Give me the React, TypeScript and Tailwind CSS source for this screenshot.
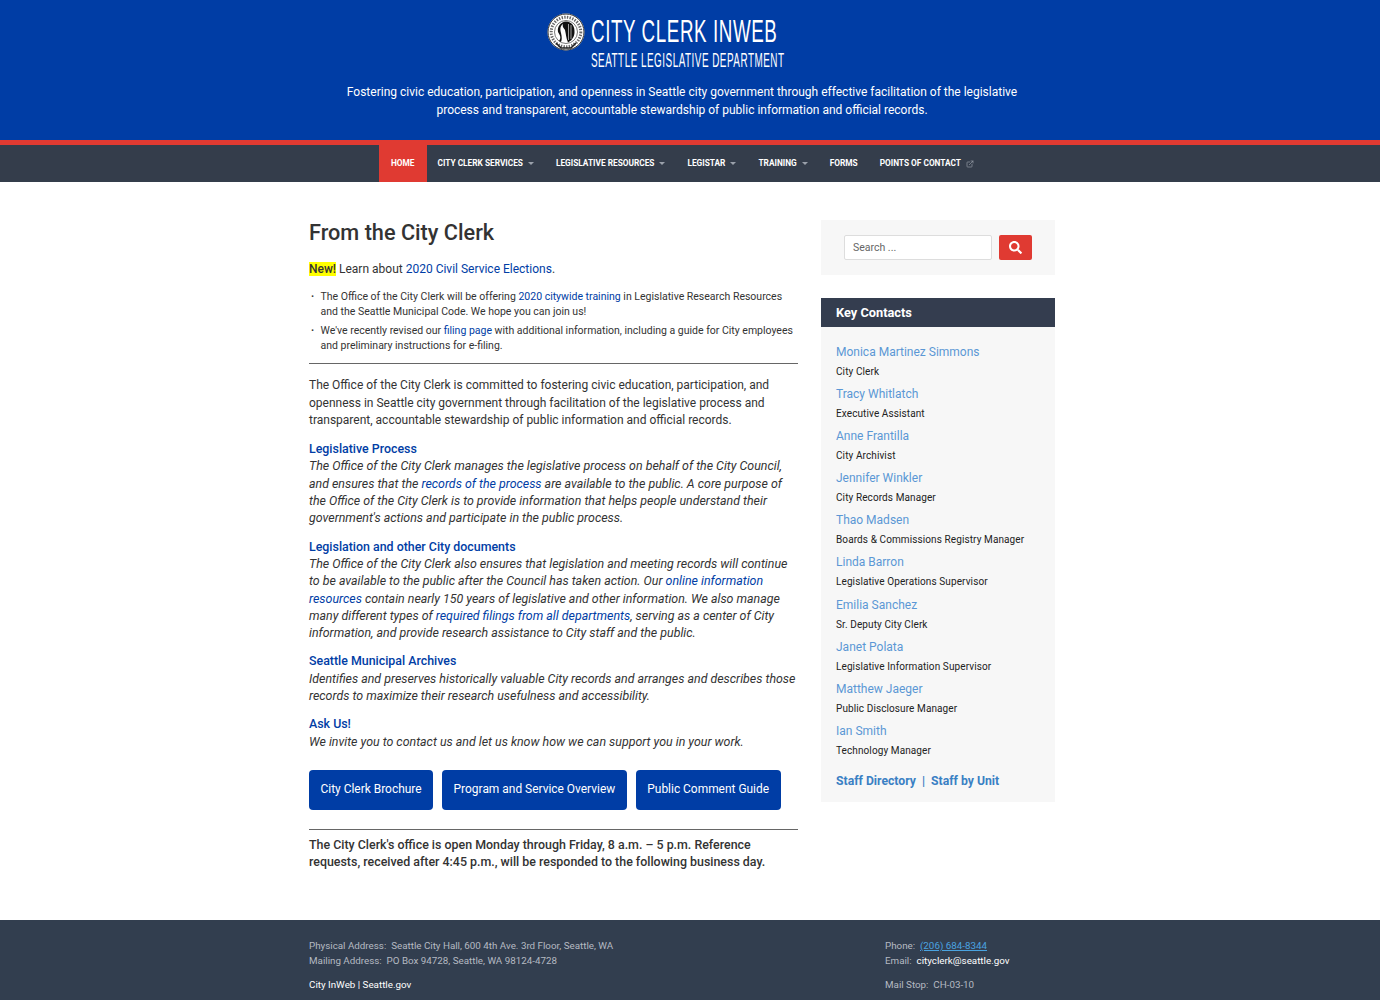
import { ExternalLink } from "lucide-react";
import { FaSearch } from "react-icons/fa";

const navItems = [
  { label: "CITY CLERK SERVICES", caret: true },
  { label: "LEGISLATIVE RESOURCES", caret: true },
  { label: "LEGISTAR", caret: true },
  { label: "TRAINING", caret: true },
  { label: "FORMS", caret: false },
];

const contacts = [
  ["Monica Martinez Simmons", "City Clerk"],
  ["Tracy Whitlatch", "Executive Assistant"],
  ["Anne Frantilla", "City Archivist"],
  ["Jennifer Winkler", "City Records Manager"],
  ["Thao Madsen", "Boards & Commissions Registry Manager"],
  ["Linda Barron", "Legislative Operations Supervisor"],
  ["Emilia Sanchez", "Sr. Deputy City Clerk"],
  ["Janet Polata", "Legislative Information Supervisor"],
  ["Matthew Jaeger", "Public Disclosure Manager"],
  ["Ian Smith", "Technology Manager"],
];

function Seal() {
  return (
    <svg width="38" height="38" viewBox="0 0 38 38" aria-hidden="true">
      <circle cx="19" cy="19" r="18.5" fill="#fff" />
      <circle cx="19" cy="19" r="18" fill="none" stroke="#333" strokeWidth="1" />
      <circle cx="19" cy="19" r="14.8" fill="none" stroke="#666" strokeWidth="3" strokeDasharray="1.4 1.3" />
      <circle cx="19" cy="19" r="11.5" fill="#fff" stroke="#222" strokeWidth="0.6" />
      <path d="M12 28 C15 24 12 21 11 19 C10 13 14 9 19 8.5 C25 9 28 13 27.5 20 C27 25 24 28 21 29.5 C19 25 19 21 18 17 C17 15 15 14 16 11 C13 13 13 16 14 20 C15 24 15 27 14 29 Z" fill="#111" />
      <path d="M21.5 11 V27 M24 12 V26" stroke="#ddd" strokeWidth="0.7" />
      <path d="M9 30 L14 35 H24 L29 30" fill="none" stroke="#222" strokeWidth="1.5" />
    </svg>
  );
}

function Caret() {
  return <span className="ml-[5px] inline-block h-0 w-0 border-x-[3px] border-t-[3px] border-x-transparent border-t-[#9aa1ab]" />;
}

function SectionBlock({ title, children }: { title: string; children: React.ReactNode }) {
  return (
    <div className="mb-[11px]">
      <h3 className="text-[12.4px] leading-[17.3px] font-medium text-[#003da5]">{title}</h3>
      <p className="text-[12.4px] italic">{children}</p>
    </div>
  );
}

function A({ children }: { children: React.ReactNode }) {
  return <a className="text-[#003da5]">{children}</a>;
}

export default function App() {
  return (
    <div className="min-h-[1000px] overflow-hidden bg-white font-['Roboto',sans-serif] text-[12px] leading-[17.3px] text-[#333]">
      {/* header */}
      <header className="h-[140px] bg-[#003da5] pt-[13px] text-white">
        <div className="flex justify-center pr-[49px]">
          <div className="mr-[6px] h-[38px]">
            <Seal />
          </div>
          <div className="w-[193px] font-['Liberation_Sans',sans-serif]">
            <div className="origin-left scale-x-[0.587] whitespace-nowrap text-[32px] leading-[36px] tracking-[1px]">
              CITY CLERK INWEB
            </div>
            <div className="origin-left scale-x-[0.495] whitespace-nowrap text-[20px] leading-[22px] tracking-[1px]">
              SEATTLE LEGISLATIVE DEPARTMENT
            </div>
          </div>
        </div>
        <div className="pr-[16px]">
          <p className="mx-auto mt-[12px] w-[700px] text-center text-[12px] leading-[18px]">
            Fostering civic education, participation, and openness in Seattle city government through effective facilitation of the legislative process and transparent, accountable stewardship of public information and official records.
          </p>
        </div>
      </header>

      {/* nav */}
      <nav className="flex h-[42px] justify-center border-t-[5px] border-[#e03a32] bg-[#343d4b] pr-[16px] text-[8.3px] font-bold leading-[37px] text-white">
        <a className="bg-[#e03a32] px-[12px]">HOME</a>
        {navItems.map((item) => (
          <a key={item.label} className="flex items-center px-[11px]">
            {item.label}
            {item.caret && <Caret />}
          </a>
        ))}
        <a className="flex items-center px-[11px]">
          POINTS OF CONTACT
          <ExternalLink className="ml-[5px] h-[8px] w-[8px] text-[#9aa1ab]" />
        </a>
      </nav>

      {/* content */}
      <div className="pr-[16px]">
        <div className="mx-auto flex h-[738px] w-[746px] justify-between pt-[37px]">
          <main className="w-[489px]">
            <h2 className="text-[21.7px] leading-[28px] font-medium text-[#333]">From the City Clerk</h2>
            <p className="mt-[14px]">
              <mark className="bg-[#ffff00] font-medium text-[#333]">New!</mark> Learn about <A>2020 Civil Service Elections</A>.
            </p>
            <ul className="mt-[11px] flex flex-col gap-[4px] text-[10.5px] leading-[15px]">
              <li className="flex">
                <span className="w-[11.5px] pl-[2px] font-bold">·</span>
                <span className="flex-1">
                  The Office of the City Clerk will be offering <A>2020 citywide training</A> in Legislative Research Resources and the Seattle Municipal Code. We hope you can join us!
                </span>
              </li>
              <li className="flex">
                <span className="w-[11.5px] pl-[2px] font-bold">·</span>
                <span className="flex-1">
                  We've recently revised our <A>filing page</A> with additional information, including a guide for City employees and preliminary instructions for e-filing.
                </span>
              </li>
            </ul>
            <hr className="mt-[10px] border-t border-[#666]" />
            <p className="mt-[13px] mb-[11px]">
              The Office of the City Clerk is committed to fostering civic education, participation, and openness in Seattle city government through facilitation of the legislative process and transparent, accountable stewardship of public information and official records.
            </p>
            <SectionBlock title="Legislative Process">
              The Office of the City Clerk manages the legislative process on behalf of the City Council, and ensures that the <A>records of the process</A> are available to the public. A core purpose of the Office of the City Clerk is to provide information that helps people understand their government's actions and participate in the public process.
            </SectionBlock>
            <SectionBlock title="Legislation and other City documents">
              The Office of the City Clerk also ensures that legislation and meeting records will continue to be available to the public after the Council has taken action. Our <A>online information resources</A> contain nearly 150 years of legislative and other information. We also manage many different types of <A>required filings from all departments</A>, serving as a center of City information, and provide research assistance to City staff and the public.
            </SectionBlock>
            <SectionBlock title="Seattle Municipal Archives">
              Identifies and preserves historically valuable City records and arranges and describes those records to maximize their research usefulness and accessibility.
            </SectionBlock>
            <SectionBlock title="Ask Us!">
              We invite you to contact us and let us know how we can support you in your work.
            </SectionBlock>
            <div className="mt-[20px] flex gap-[9px]">
              {["City Clerk Brochure", "Program and Service Overview", "Public Comment Guide"].map((b) => (
                <a key={b} className="flex h-[40px] items-center rounded-[4px] bg-[#003da5] px-[11.5px] text-[11.95px] text-[#fff]">
                  {b}
                </a>
              ))}
            </div>
            <hr className="mt-[19px] border-t border-[#666]" />
            <p className="mt-[6px] text-[12.42px] font-medium">
              The City Clerk's office is open Monday through Friday, 8 a.m. – 5 p.m. Reference requests, received after 4:45 p.m., will be responded to the following business day.
            </p>
          </main>

          <aside className="w-[234px] pt-[1px]">
            <div className="flex h-[55px] items-center gap-[7px] bg-[#f7f7f7] pl-[23px]">
              <div className="flex h-[25px] w-[148px] items-center rounded-[2px] border border-[#ddd] bg-white pl-[8px] text-[10.5px] text-[#666]">
                Search ...
              </div>
              <div className="flex h-[25px] w-[33px] items-center justify-center rounded-[2px] bg-[#e03a32]">
                <FaSearch className="h-[13px] w-[13px] text-white" />
              </div>
            </div>
            <div className="mt-[23px] flex h-[29px] items-center bg-[#343d4f] pl-[15px] text-[12.8px] font-bold text-white">
              Key Contacts
            </div>
            <div className="h-[475px] bg-[#f7f7f7] px-[15px] pt-[16px]">
              {contacts.map(([name, role]) => (
                <div key={name} className="h-[42.1px]">
                  <div className="h-[19px] text-[12px] leading-[18px] text-[#5b97d5]">{name}</div>
                  <div className="text-[10px] leading-[20px] tracking-[0.1px] text-[#222]">{role}</div>
                </div>
              ))}
              <div className="mt-[9px] text-[12.2px] font-bold text-[#3a80c4]">
                Staff Directory&nbsp; |&nbsp; Staff by Unit
              </div>
            </div>
          </aside>
        </div>
      </div>

      {/* footer */}
      <footer className="h-[80px] bg-[#323e4f] pt-[18px] pr-[16px] text-[9.8px] leading-[15px] text-[#b5bac2]">
        <div className="mx-auto flex w-[746px] justify-between">
          <div>
            <div>Physical Address:&nbsp; Seattle City Hall, 600 4th Ave. 3rd Floor, Seattle, WA</div>
            <div>Mailing Address:&nbsp; PO Box 94728, Seattle, WA 98124-4728</div>
            <div className="mt-[9px] text-white">City InWeb | Seattle.gov</div>
          </div>
          <div className="w-[170px]">
            <div>
              Phone:&nbsp; <a className="text-[#4aa3e0] underline">(206) 684-8344</a>
            </div>
            <div>
              Email:&nbsp; <span className="text-white">cityclerk@seattle.gov</span>
            </div>
            <div className="mt-[9px]">Mail Stop:&nbsp; CH-03-10</div>
          </div>
        </div>
      </footer>
    </div>
  );
}
